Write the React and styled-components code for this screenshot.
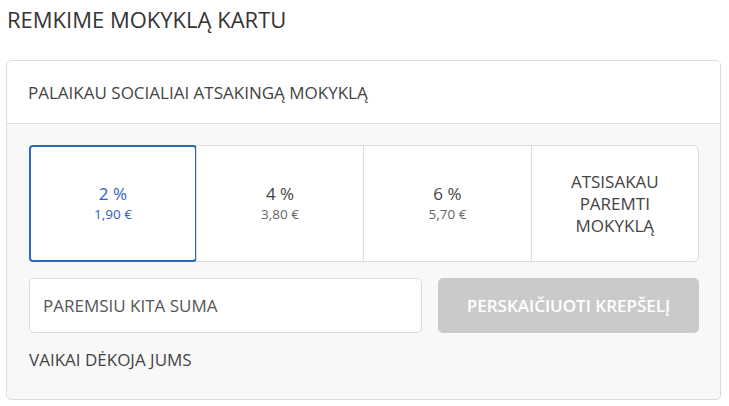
import React, { useState } from 'react';
import styled, { createGlobalStyle } from 'styled-components';

const GlobalStyle = createGlobalStyle`
    body {
        margin: 0;
        background: #fff;
        font-family: "Open Sans", "Liberation Sans", sans-serif;
        color: #333;
    }
`;

const Page = styled.div`
    padding: 5px 8px 0 6px;
`;
const Title = styled.h2`
    margin: 0 0 0 1px;
    font-size: 22px;
    font-weight: 400;
    line-height: 29px;
    color: #333;
`;
const Card = styled.div`
    margin-top: 26px;
    border: 1px solid #dcdcdc;
    border-radius: 5px;
    background: #f8f8f8;
    overflow: hidden;
`;
const CardHeader = styled.div`
    height: 62px;
    display: flex;
    align-items: center;
    padding: 0 21px;
    background: #fff;
    border-bottom: 1px solid #dcdcdc;
    font-size: 17px;
    color: #444;
`;
const CardBody = styled.div`
    padding: 21px 21px 28px 22px;
`;
const Options = styled.div`
    display: flex;
    height: 115px;
    border: 1px solid #dcdcdc;
    border-radius: 6px;
    background: #fff;
`;
const Option = styled.button`
    flex: ${p => (p.$active ? '0.985' : '1')};
    display: flex;
    flex-direction: column;
    align-items: center;
    justify-content: center;
    margin: ${p => (p.$active ? '-1px' : '0')};
    border: ${p => (p.$active ? '2px solid #2a69b5' : 'none')};
    border-left: ${p => (p.$active ? '2px solid #2a69b5' : p.$first ? 'none' : '1px solid #dcdcdc')};
    border-radius: ${p => (p.$active ? '4px' : '0')};
    background: transparent;
    font-family: inherit;
    color: ${p => (p.$active ? '#2e62c4' : '#444')};
    cursor: pointer;
    padding: 0;
`;
const Percent = styled.span`
    font-size: 17px;
    line-height: 22px;
`;
const Amount = styled.span`
    font-size: 13.5px;
    line-height: 19px;
    color: ${p => (p.$active ? '#2e62c4' : '#666')};
`;
const Decline = styled.span`
    font-size: 17px;
    line-height: 22px;
    color: #444;
    text-align: center;
`;
const Row = styled.div`
    display: flex;
    gap: 16px;
    margin-top: 16px;
`;
const Input = styled.input`
    width: 393px;
    height: 55px;
    box-sizing: border-box;
    border: 1px solid #dcdcdc;
    border-radius: 5px;
    background: #fff;
    padding: 0 13px;
    font-family: inherit;
    font-size: 17px;
    outline: none;
    &::placeholder {
        color: #555;
    }
`;
const Submit = styled.button`
    flex: 1;
    height: 55px;
    border: none;
    border-radius: 5px;
    background: #cacaca;
    color: #fff;
    font-family: inherit;
    font-size: 17px;
    font-weight: 600;
`;
const Thanks = styled.div`
    margin-top: 15px;
    font-size: 17px;
    line-height: 23px;
    color: #444;
`;

const options = [
    { pct: '2', sum: '1,90 €' },
    { pct: '4', sum: '3,80 €' },
    { pct: '6', sum: '5,70 €' },
];

const App = () => {
    const [active, setActive] = useState(0);
    return (
        <Page>
            <GlobalStyle />
            <Title>REMKIME MOKYKLĄ KARTU</Title>
            <Card>
                <CardHeader>PALAIKAU SOCIALIAI ATSAKINGĄ MOKYKLĄ</CardHeader>
                <CardBody>
                    <Options>
                        {options.map((o, i) => (
                            <Option key={o.pct} $first={i === 0} $active={active === i} onClick={() => setActive(i)}>
                                <Percent>{o.pct} %</Percent>
                                <Amount $active={active === i}>{o.sum}</Amount>
                            </Option>
                        ))}
                        <Option $active={active === 3} onClick={() => setActive(3)}>
                            <Decline>ATSISAKAU<br />PAREMTI<br />MOKYKLĄ</Decline>
                        </Option>
                    </Options>
                    <Row>
                        <Input placeholder="PAREMSIU KITA SUMA" />
                        <Submit disabled>PERSKAIČIUOTI KREPŠELĮ</Submit>
                    </Row>
                    <Thanks>VAIKAI DĖKOJA JUMS</Thanks>
                </CardBody>
            </Card>
        </Page>
    );
};

export default App;
